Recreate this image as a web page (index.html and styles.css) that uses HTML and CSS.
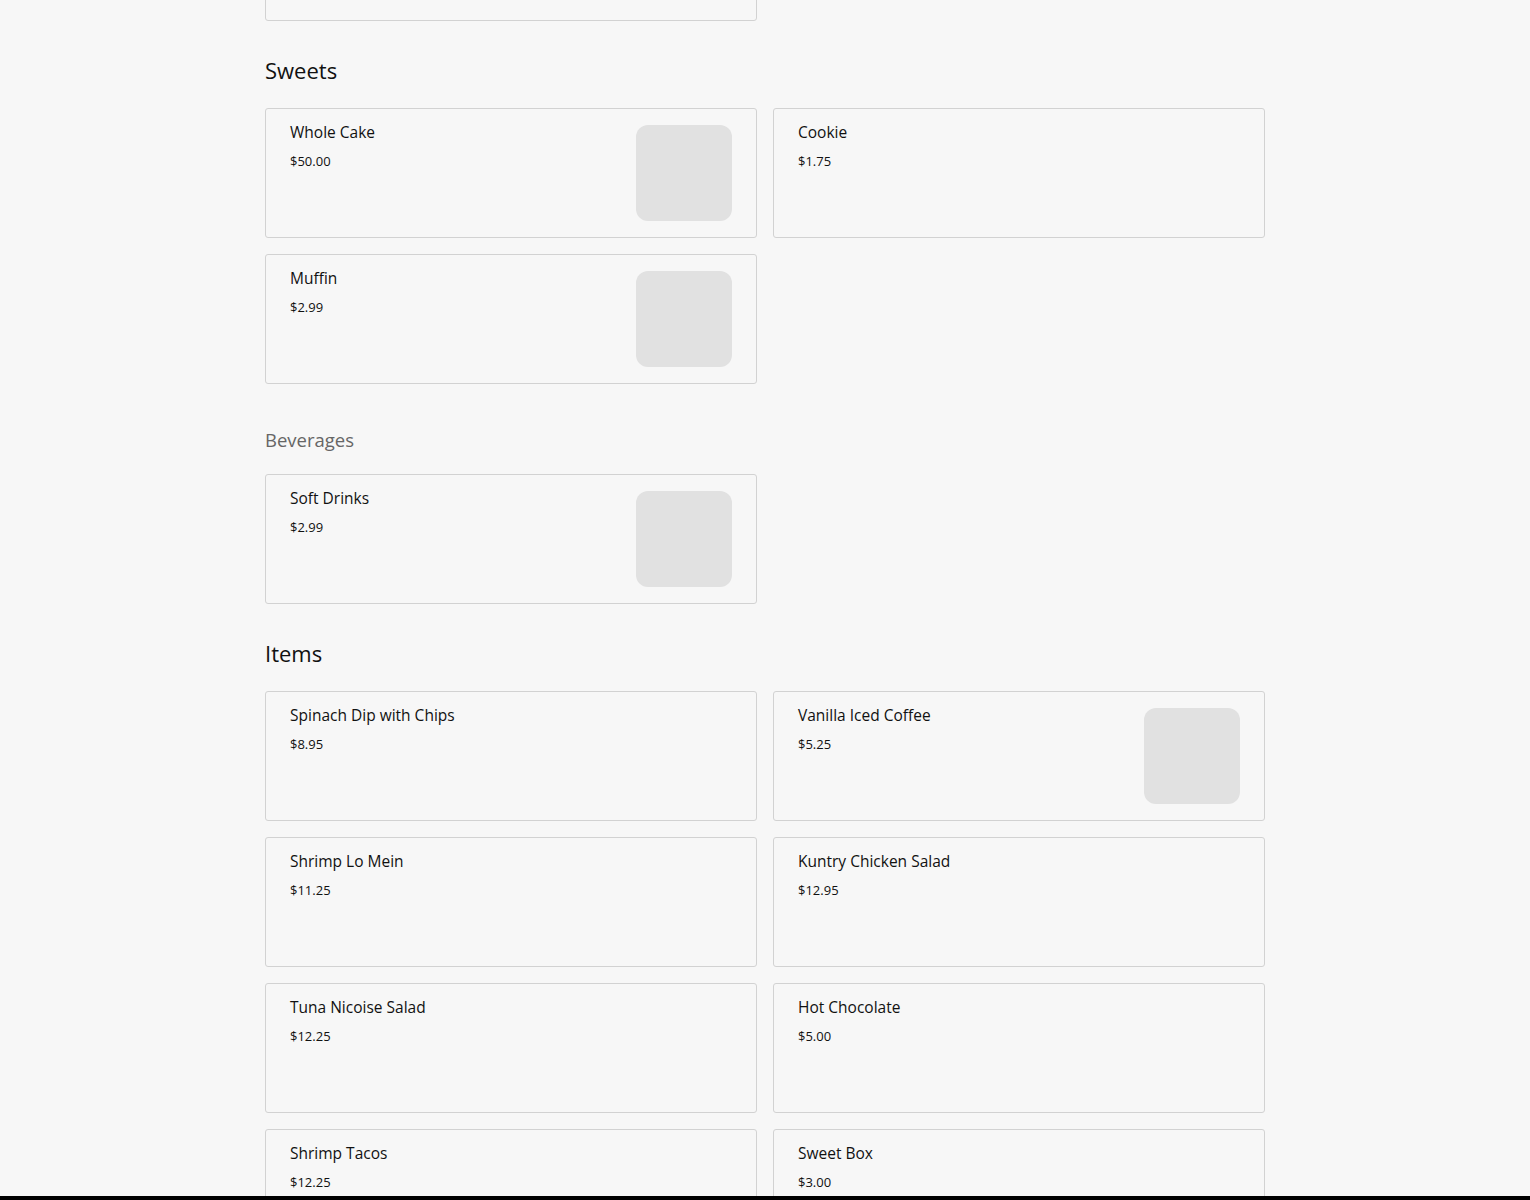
FILE: index.html
```html
<!DOCTYPE html>
<html lang="en">
  <head>
    <meta charset="UTF-8" />
    <title>Menu</title>
    <link rel="stylesheet" href="styles.css">
  </head>
  <body>
    <div class="menu">
      <div class="grid">
        <div class="card"></div>
      </div>

      <h2 class="section-title">Sweets</h2>
      <div class="grid">
        <div class="card">
          <div class="info">
            <p class="name">Whole Cake</p>
            <p class="price">$50.00</p>
          </div>
          <div class="thumb"></div>
        </div>
        <div class="card">
          <div class="info">
            <p class="name">Cookie</p>
            <p class="price">$1.75</p>
          </div>
        </div>
        <div class="card">
          <div class="info">
            <p class="name">Muffin</p>
            <p class="price">$2.99</p>
          </div>
          <div class="thumb"></div>
        </div>
      </div>

      <h3 class="sub-title">Beverages</h3>
      <div class="grid">
        <div class="card">
          <div class="info">
            <p class="name">Soft Drinks</p>
            <p class="price">$2.99</p>
          </div>
          <div class="thumb"></div>
        </div>
      </div>

      <h2 class="section-title">Items</h2>
      <div class="grid">
        <div class="card">
          <div class="info">
            <p class="name">Spinach Dip with Chips</p>
            <p class="price">$8.95</p>
          </div>
        </div>
        <div class="card">
          <div class="info">
            <p class="name">Vanilla Iced Coffee</p>
            <p class="price">$5.25</p>
          </div>
          <div class="thumb"></div>
        </div>
        <div class="card">
          <div class="info">
            <p class="name">Shrimp Lo Mein</p>
            <p class="price">$11.25</p>
          </div>
        </div>
        <div class="card">
          <div class="info">
            <p class="name">Kuntry Chicken Salad</p>
            <p class="price">$12.95</p>
          </div>
        </div>
        <div class="card">
          <div class="info">
            <p class="name">Tuna Nicoise Salad</p>
            <p class="price">$12.25</p>
          </div>
        </div>
        <div class="card">
          <div class="info">
            <p class="name">Hot Chocolate</p>
            <p class="price">$5.00</p>
          </div>
        </div>
        <div class="card">
          <div class="info">
            <p class="name">Shrimp Tacos</p>
            <p class="price">$12.25</p>
          </div>
        </div>
        <div class="card">
          <div class="info">
            <p class="name">Sweet Box</p>
            <p class="price">$3.00</p>
          </div>
        </div>
      </div>
    </div>

    <div class="bottom-bar"></div>
  </body>
</html>
```

FILE: styles.css
```css
* {
  margin: 0;
  padding: 0;
  box-sizing: border-box;
}

body {
  background: #f7f7f7;
  color: #111;
  font-family: "Open Sans", "Noto Sans", sans-serif;
  overflow: hidden;
}

.menu {
  width: 1000px;
  margin: -109px auto 0;
}

.grid {
  display: grid;
  grid-template-columns: 1fr 1fr;
  gap: 16px;
}

.card {
  height: 130px;
  padding: 16px 24px;
  border: 1px solid #d2d2d2;
  border-radius: 3px;
  display: flex;
  justify-content: space-between;
}

.name {
  font-size: 15.5px;
  line-height: 14px;
}

.price {
  margin-top: 14px;
  font-size: 13px;
  line-height: 16px;
  font-weight: 500;
}

.thumb {
  width: 96px;
  height: 96px;
  border-radius: 12px;
  background: #e1e1e1;
}

.section-title {
  font-size: 22px;
  font-weight: 400;
  line-height: 26px;
  margin: 36px 0 25px;
}

.sub-title {
  font-size: 18.5px;
  font-weight: 400;
  color: #666;
  line-height: 22px;
  margin: 45px 0 23px;
}

.bottom-bar {
  position: fixed;
  left: 0;
  right: 0;
  bottom: 0;
  height: 4px;
  background: #000;
}
```
